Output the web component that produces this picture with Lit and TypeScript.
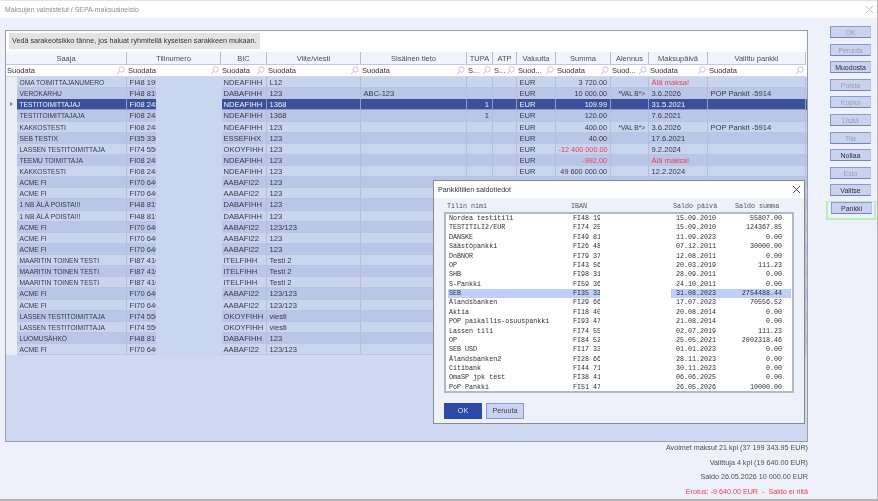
import { LitElement, html, css } from "lit";
import { customElement } from "lit/decorators.js";

type Row = [string, string, string, string, string, string, string, string, string, string, string, string];

const D = "NDEAFIHH";
const STOP = "Älä maksa!";
// saaja, tili, bic, viite, sisainen, tupa, atp, summa, alennus, pvm, pankki, tausta
const rows: Row[] = [
  ["OMA TOIMITTAJANUMERO", "FI48 195", D, "L12", "", "", "", "3 720.00", "", STOP, "", "l"],
  ["VEROKARHU", "FI48 819", "DABAFIHH", "123", "ABC-123", "", "", "10 000.00", "*VAL B*>", "3.6.2026", "POP Pankit -5914", "d"],
  ["TESTITOIMITTAJAJ", "FI08 248", D, "1368", "", "1", "", "109.99", "", "31.5.2021", "", "s"],
  ["TESTITOIMITTAJAJA", "FI08 248", D, "1368", "", "1", "", "120.00", "", "7.6.2021", "", "d"],
  ["KAKKOSTESTI", "FI08 248", D, "123", "", "", "", "400.00", "*VAL B*>", "3.6.2026", "POP Pankit -5914", "l"],
  ["SEB TESTIX", "FI35 330", "ESSEFIHX", "123", "", "", "", "40.00", "", "17.6.2021", "", "d"],
  ["LASSEN TESTITOIMITTAJA", "FI74 550", "OKOYFIHH", "123", "", "", "", "-12 400 000.00", "", "9.2.2024", "", "l"],
  ["TEEMU TOIMITTAJA", "FI08 248", D, "123", "", "", "", "-992.00", "", STOP, "", "d"],
  ["KAKKOSTESTI", "FI08 248", D, "123", "", "", "", "49 600 000.00", "", "12.2.2024", "", "l"],
  ["ACME FI", "FI70 640", "AABAFI22", "123", "", "", "", "", "", "", "", "d"],
  ["ACME FI", "FI70 640", "AABAFI22", "123", "", "", "", "", "", "", "", "l"],
  ["1 NB ÄLÄ POISTA!!!", "FI48 819", "DABAFIHH", "123", "", "", "", "", "", "", "", "d"],
  ["1 NB ÄLÄ POISTA!!!", "FI48 819", "DABAFIHH", "123", "", "", "", "", "", "", "", "l"],
  ["ACME FI", "FI70 640", "AABAFI22", "123/123", "", "", "", "", "", "", "", "d"],
  ["ACME FI", "FI70 640", "AABAFI22", "123", "", "", "", "", "", "", "", "l"],
  ["ACME FI", "FI70 640", "AABAFI22", "123", "", "", "", "", "", "", "", "d"],
  ["MAARITIN TOINEN TESTI", "FI87 410", "ITELFIHH", "Testi 2", "", "", "", "", "", "", "", "l"],
  ["MAARITIN TOINEN TESTI", "FI87 410", "ITELFIHH", "Testi 2", "", "", "", "", "", "", "", "d"],
  ["MAARITIN TOINEN TESTI", "FI87 410", "ITELFIHH", "Testi 2", "", "", "", "", "", "", "", "l"],
  ["ACME FI", "FI70 640", "AABAFI22", "123/123", "", "", "", "", "", "", "", "d"],
  ["ACME FI", "FI70 640", "AABAFI22", "123/123", "", "", "", "", "", "", "", "l"],
  ["LASSEN TESTITOIMITTAJA", "FI74 550", "OKOYFIHH", "viesti", "", "", "", "", "", "", "", "d"],
  ["LASSEN TESTITOIMITTAJA", "FI74 550", "OKOYFIHH", "viesti", "", "", "", "", "", "", "", "l"],
  ["LUOMUSÄHKÖ", "FI48 819", "DABAFIHH", "123", "", "", "", "", "", "", "", "d"],
  ["ACME FI", "FI70 640", "AABAFI22", "123/123", "", "", "", "", "", "", "", "l"],
];

const cols = [
  ["Saaja", "Suodata"],
  ["Tilinumero", "Suodata"],
  ["BIC", "Suodata"],
  ["Viite/viesti", "Suodata"],
  ["Sisäinen tieto", "Suodata"],
  ["TUPA", "S..."],
  ["ATP", "S..."],
  ["Valuutta", "Suod..."],
  ["Summa", "Suodata"],
  ["Alennus", "Suod..."],
  ["Maksupäivä", "Suodata"],
  ["Valittu pankki", "Suodata"],
];

const accounts = [
  ["Nordea testitili", "FI48 19", "15.09.2010", "55807.00"],
  ["TESTITILI2/EUR", "FI74 25", "15.09.2010", "124367.85"],
  ["DANSKE", "FI49 81", "11.09.2023", "0.00"],
  ["Säästöpankki", "FI26 48", "07.12.2011", "30000.00"],
  ["DnBNOR", "FI79 37", "12.08.2011", "0.00"],
  ["OP", "FI43 56", "20.03.2019", "111.23"],
  ["SHB", "FI98 31", "28.09.2011", "0.00"],
  ["S-Pankki", "FI59 36", "24.10.2011", "0.00"],
  ["SEB", "FI35 33", "31.08.2023", "2754488.44"],
  ["Ålandsbanken", "FI29 66", "17.07.2023", "70556.52"],
  ["Aktia", "FI18 40", "20.08.2014", "0.00"],
  ["POP paikallis-osuuspankki", "FI93 47", "21.08.2014", "0.00"],
  ["Lassen tili", "FI74 55", "02.07.2019", "111.23"],
  ["OP", "FI84 52", "25.05.2021", "2002318.46"],
  ["SEB USD", "FI17 33", "01.01.2023", "0.00"],
  ["Ålandsbanken2", "FI28 66", "28.11.2023", "0.00"],
  ["Citibank", "FI44 71", "30.11.2023", "0.00"],
  ["OmaSP jpk test", "FI38 41", "06.06.2025", "0.00"],
  ["PoP Pankki", "FI51 47", "26.05.2026", "10000.00"],
];

const buttons: [string, boolean][] = [
  ["OK", false], ["Peruuta", false], ["Muodosta", true], ["Poista", false], ["Kopioi", false],
  ["Lisää", false], ["Tila", false], ["Nollaa", true], ["Esto", false], ["Valitse", true],
];

@customElement("app-root")
export class AppRoot extends LitElement {
  static styles = css`
    :host {
      display: block;
      width: 878px;
      height: 501px;
      box-sizing: border-box;
      overflow: hidden;
      position: relative;
      font-family: "Liberation Sans", Arial, sans-serif;
      font-size: 7.6px;
      color: #343947;
      background: #eef1fa;
      border-right: 1px solid #b4b4b4;
      border-bottom: 2px solid #b4b4b4;
      filter: blur(0.4px);
    }
    .titlebar {
      height: 18px;
      background: #fff;
      display: flex;
      align-items: center;
      justify-content: space-between;
      padding: 0 3px 0 5px;
      color: #8a8d94;
      font-size: 6.9px;
      border-top: 1px solid #e4e4e4;
      box-sizing: border-box;
    }
    .main {
      display: flex;
      height: 408px;
      padding: 12px 0 0 5px;
      gap: 22px;
    }
    .panel {
      width: 803px;
      height: 412px;
      box-sizing: border-box;
      border: 1px solid #9c9ea4;
      background: #ced8f0;
      position: relative;
      overflow: hidden;
    }
    .group {
      height: 21px;
      background: #fff;
      padding: 2px 0 0 3px;
      box-sizing: border-box;
      font-size: 7.2px;
    }
    .group span {
      display: inline-block;
      background: #e3e3e3;
      padding: 0 3px;
      height: 16px;
      box-sizing: border-box;
      line-height: 16px;
      color: #333;
    }
    .grid {
      display: grid;
      grid-template-columns: 121px 94px 46px 94px 106px 26px 24px 39px 55px 38px 59px 98px;
      background: #fff;
      font-size: 7.5px;
    }
    .head {
      height: 13px;
      line-height: 13px;
      text-align: center;
      background: #f2f4fb;
      border-right: 1px solid #b9bfd0;
      border-bottom: 1px solid #c4c9d8;
      box-sizing: border-box;
      color: #4a4d58;
      white-space: nowrap;
      overflow: hidden;
    }
    .filter {
      height: 12px;
      line-height: 11px;
      background: #fff;
      position: relative;
      padding-left: 1px;
      box-sizing: border-box;
      white-space: nowrap;
      overflow: hidden;
      color: #333;
      border-bottom: 1px solid #d5d8e2;
    }
    .filter svg {
      position: absolute;
      right: 2px;
      top: 1px;
      width: 9px;
      height: 9px;
    }
    .body {
      position: relative;
    }
    .row {
      display: grid;
      grid-template-columns: 11px 110px 94px 46px 94px 106px 26px 24px 39px 55px 38px 59px 98px;
      height: 11.125px;
      line-height: 12px;
      background: #c9d4ef;
    }
    .row.d { background: #bac6e7; }
    .row.s { background: #3a5199; color: #eef1fa; }
    .ind { background: #e9edf8; position: relative; }
    .ind i {
      position: absolute;
      left: 4px;
      top: 3px;
      border-left: 3px solid #777;
      border-top: 2.5px solid transparent;
      border-bottom: 2.5px solid transparent;
    }
    .cell {
      padding: 0 3px 0 2.5px;
      border-right: 1px solid #b5bfdb;
      border-bottom: 1px solid #bac4e0;
      box-sizing: border-box;
      white-space: nowrap;
      overflow: hidden;
    }
    .row.s .cell { border-color: #8d9cc9; }
    .cell.name { font-size: 6.7px; }
    .cell.sum { font-size: 7.3px; }
    .cell.disc { font-size: 6.5px; }
    .cell.r { text-align: right; }
    .cell.c { text-align: center; }
    .neg { color: #ef3c55; }
    .mask {
      position: absolute;
      left: 150px;
      top: 0;
      width: 66px;
      height: 279px;
      background: #cad5f0;
    }
    .side {
      width: 42px;
      display: flex;
      flex-direction: column;
      gap: 5.6px;
      margin-top: -4px;
    }
    .btn {
      height: 12px;
      line-height: 11px;
      width: 41px;
      flex: none;
      box-sizing: border-box;
      text-align: center;
      background: #c9d3ee;
      border: 1px solid #8a99cf;
      border-right-color: #b9c3e2;
      border-bottom-color: #6f83c5;
      color: #9a9fae;
      font-size: 7px;
    }
    .btn.on { color: #2c3040; }
    .pankki {
      margin: -1px 0 0 -4px;
      padding: 0 4px 4px 3px;
      width: 50px;
      flex: none;
      box-sizing: border-box;
      border: 1px solid #b6f0bd;
      border-width: 1px 2px 2px 2px;
      background: #eef1fa;
    }
    .pankki .btn { color: #2c3040; }
    .totals {
      position: absolute;
      right: 69px;
      top: 441px;
      text-align: right;
      line-height: 14.6px;
      font-size: 7.2px;
      color: #4a4d58;
    }
    .err { color: #ef3c55; }
    .dlg {
      position: absolute;
      left: 433px;
      top: 180px;
      width: 372px;
      height: 244px;
      box-sizing: border-box;
      background: #eef1fa;
      border: 1px solid #8a8a8a;
      display: flex;
      flex-direction: column;
      z-index: 2;
    }
    .dlg-title {
      height: 17px;
      flex: none;
      background: #fff;
      display: flex;
      align-items: center;
      justify-content: space-between;
      padding: 0 3px 0 4px;
      font-size: 7.2px;
      color: #333;
    }
    .dlg-head, .acc {
      font-family: "Liberation Mono", monospace;
      font-size: 6.7px;
      display: grid;
    }
    .dlg-head {
      height: 14px;
      line-height: 16px;
      grid-template-columns: 124px 102px 62px 65px;
      padding-left: 13px;
      box-sizing: border-box;
      color: #555;
    }
    .list {
      margin: 0 10px;
      height: 181px;
      flex: none;
      background: #fff;
      border: 2px solid #b4b8c4;
      box-sizing: border-box;
      position: relative;
    }
    .acc {
      margin: 0 1px 0 2px;
      padding: 0 9px 0 1px;
      height: 9.39px;
      line-height: 9px;
      grid-template-columns: 124px 103px 62px 44px;
      white-space: nowrap;
      color: #2e2e2e;
    }
    .acc.sel { background: #bfcffa; }
    .acc .amt { text-align: right; }
    .iban-mask {
      position: absolute;
      left: 154px;
      top: 0;
      width: 71px;
      bottom: 0;
      background: #fff;
    }
    .actions {
      display: flex;
      gap: 4px;
      padding: 10px 0 0 10px;
    }
    .dbtn {
      width: 38px;
      height: 16px;
      line-height: 14px;
      box-sizing: border-box;
      text-align: center;
      font-size: 7.2px;
      background: #c9d3ee;
      border: 1px solid #8a99cf;
      color: #3a3f4c;
    }
    .dbtn.primary {
      background: #2f49a8;
      border-color: #2f49a8;
      color: #dfe5f8;
    }
  `;

  render() {
    return html`
      <div class="titlebar">
        <span>Maksujen valmistelut / SEPA-maksuaineisto</span>
        ${this.closeIcon("#c4c4c4")}
      </div>
      <div class="main">
        <div class="panel">
          <div class="group"><span>Vedä sarakeotsikko tänne, jos haluat ryhmitellä kyseisen sarakkeen mukaan.</span></div>
          <div class="grid">
            ${cols.map((c) => html`<div class="head">${c[0]}</div>`)}
            ${cols.map((c) => html`<div class="filter">${c[1]}${this.searchIcon()}</div>`)}
          </div>
          <div class="body">
            ${rows.map((r) => this.renderRow(r))}
            <div class="mask"></div>
          </div>
        </div>
        <div class="side">
          ${buttons.map((b) => html`<div class="btn ${b[1] ? "on" : ""}">${b[0]}</div>`)}
          <div class="pankki"><div class="btn">Pankki</div></div>
        </div>
      </div>
      <div class="totals">
        <div>Avoimet maksut 21 kpl (37 199 343.95 EUR)</div>
        <div>Valittuja 4 kpl (19 640.00 EUR)</div>
        <div>Saldo 26.05.2026 10 000.00 EUR</div>
        <div class="err">Erotus: -9 640.00 EUR &nbsp;-&nbsp; Saldo ei riitä</div>
      </div>
      <div class="dlg">
        <div class="dlg-title">
          <span>Pankkitilien saldotiedot</span>
          ${this.closeIcon("#444")}
        </div>
        <div class="dlg-head"><span>Tilin nimi</span><span>IBAN</span><span>Saldo päivä</span><span>Saldo summa</span></div>
        <div class="list">
          ${accounts.map(
            (a) => html`<div class="acc ${a[0] === "SEB" ? "sel" : ""}">
              <span>${a[0]}</span><span>${a[1]}</span><span>${a[2]}</span><span class="amt">${a[3]}</span>
            </div>`
          )}
          <div class="iban-mask"></div>
        </div>
        <div class="actions">
          <div class="dbtn primary">OK</div>
          <div class="dbtn">Peruuta</div>
        </div>
      </div>
    `;
  }

  renderRow(r: Row) {
    const neg = r[7].startsWith("-");
    const stop = r[9] === STOP;
    return html`<div class="row ${r[11]}">
      <div class="ind">${r[11] === "s" ? html`<i></i>` : ""}</div>
      <div class="cell name">${r[0]}</div>
      <div class="cell">${r[1]}</div>
      <div class="cell">${r[2]}</div>
      <div class="cell">${r[3]}</div>
      <div class="cell">${r[4]}</div>
      <div class="cell r">${r[5]}</div>
      <div class="cell c">${r[6]}</div>
      <div class="cell">${r[7] ? "EUR" : ""}</div>
      <div class="cell r sum ${neg ? "neg" : ""}">${r[7]}</div>
      <div class="cell r disc">${r[8]}</div>
      <div class="cell ${stop ? "neg" : ""}">${r[9]}</div>
      <div class="cell">${r[10]}</div>
    </div>`;
  }

  searchIcon() {
    return html`<svg viewBox="0 0 9 9" fill="none" stroke="#b9c6ea" stroke-width="1">
      <circle cx="5.5" cy="3.5" r="2.7"></circle>
      <path d="M3.5 5.5 L0.8 8.2"></path>
    </svg>`;
  }

  closeIcon(color: string) {
    return html`<svg width="9" height="9" viewBox="0 0 9 9" fill="none" stroke=${color} stroke-width="1">
      <path d="M1 1 L8 8 M8 1 L1 8"></path>
    </svg>`;
  }
}
